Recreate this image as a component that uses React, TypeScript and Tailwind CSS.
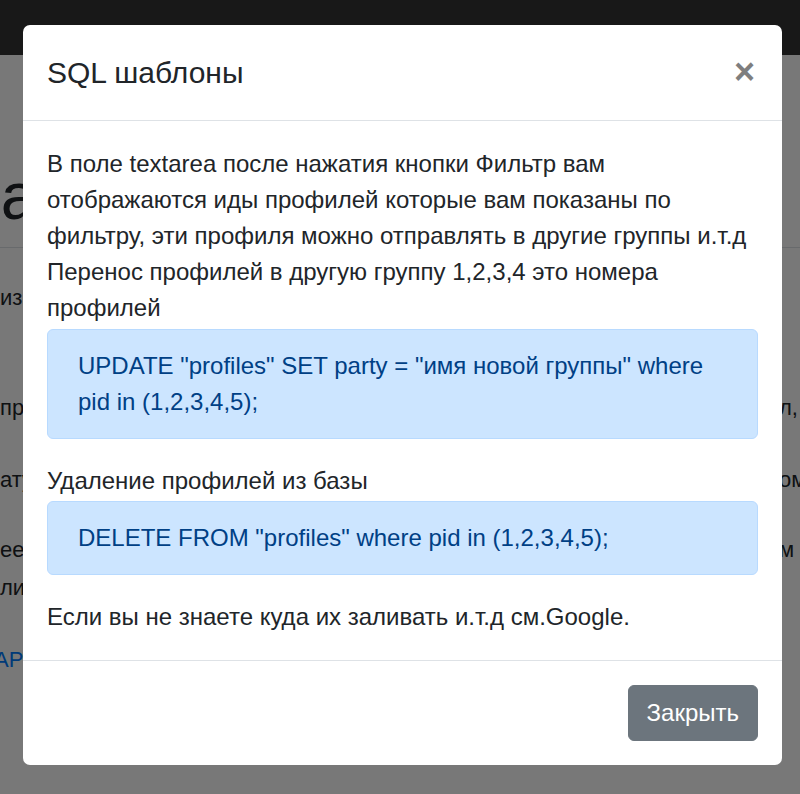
import React from 'react';

const rows = [
  { mt: 'mt-[31px]', left: 'изация', right: '' },
  { mt: 'mt-[74px]', left: 'при', right: 'л, что' },
  { mt: 'mt-[36px]', left: 'атут', right: 'ом' },
  { mt: 'mt-[34px]', left: 'еее', right: 'м' },
  { mt: 'mt-[2px]', left: 'ли', right: '' },
];

function BackgroundPage() {
  return (
    <div className="flex flex-col">
      <div className="h-[55px] bg-[#343434]" />
      <div className="h-[193px] border-b border-[#dee2e6] pt-[105px]">
        <div className="-ml-[14px] text-[66px] leading-[72px] text-[#212529]">la</div>
      </div>
      {rows.map((r, i) => (
        <div key={i} className={`${r.mt} flex h-[36px] items-center text-[22px] text-[#212529]`}>
          <span className="w-[779px] shrink-0 overflow-hidden whitespace-nowrap">{r.left}</span>
          <span className="whitespace-nowrap">{r.right}</span>
        </div>
      ))}
      <div className="mt-[36px] flex h-[36px] items-center text-[22px] text-[#007bff]">
        <span className="-ml-[6px]">API</span>
      </div>
    </div>
  );
}

export default function App() {
  return (
    <div
      className="relative h-[794px] w-[800px] overflow-hidden bg-white"
      style={{ fontFamily: '"Liberation Sans", Arial, sans-serif' }}
    >
      <BackgroundPage />

      <div className="absolute inset-0 bg-black/[0.53] pl-[23px] pt-[25px]">
        <div className="flex w-[759px] flex-col rounded-[7px] bg-white text-[#212529]">
          <div className="flex items-start justify-between border-b border-[#dee2e6] px-[24px] py-[24px]">
            <h5 className="text-[30px] font-normal leading-[47px]">SQL шаблоны</h5>
            <button className="mr-[3px] mt-[-1px] text-[36px] font-bold leading-[47px] text-black opacity-50">
              ×
            </button>
          </div>

          <div className="px-[24px] pt-[25px] pb-[25px] text-[24px] leading-[36px]">
            <p>
              В поле textarea после нажатия кнопки Фильтр вам отображаются иды профилей которые вам
              показаны по фильтру, эти профиля можно отправлять в другие группы и.т.д Перенос профилей в
              другую группу 1,2,3,4 это номера профилей
            </p>
            <div className="mt-[3px] mb-[24px] rounded-[6px] border border-[#b8daff] bg-[#cce5ff] px-[30px] py-[18px] text-[#004085]">
              UPDATE "profiles" SET party = "имя новой группы" where pid in (1,2,3,4,5);
            </div>
            <p>Удаление профилей из базы</p>
            <div className="mt-[2px] mb-[24px] rounded-[6px] border border-[#b8daff] bg-[#cce5ff] px-[30px] py-[18px] text-[#004085]">
              DELETE FROM "profiles" where pid in (1,2,3,4,5);
            </div>
            <p>Если вы не знаете куда их заливать и.т.д см.Google.</p>
          </div>

          <div className="flex justify-end border-t border-[#dee2e6] p-[24px]">
            <button className="rounded-[6px] border border-[#6c757d] bg-[#6c757d] px-[18px] py-[9px] text-[24px] leading-[36px] text-white">
              Закрыть
            </button>
          </div>
        </div>
      </div>
    </div>
  );
}
